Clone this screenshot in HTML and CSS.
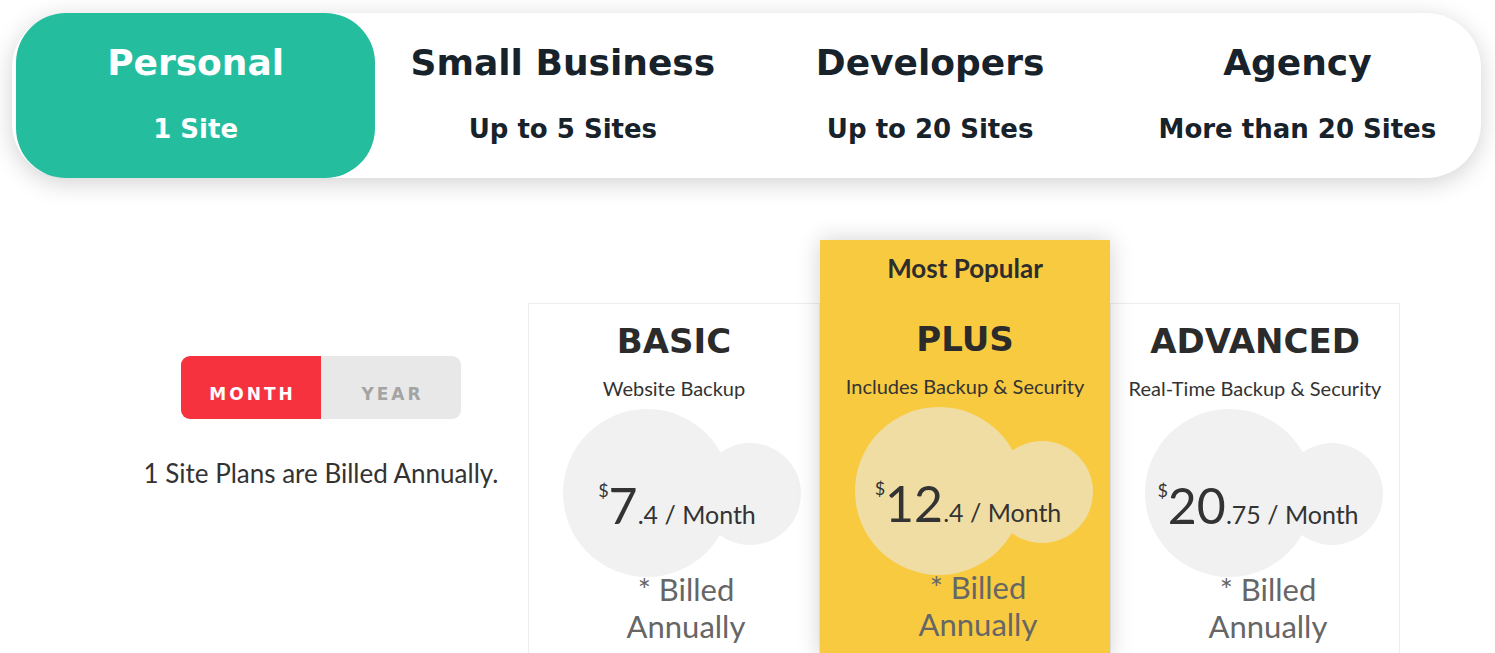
FILE: index.html
```html
<!DOCTYPE html>
<html lang="en">
<head>
<meta charset="utf-8">
<title>Pricing</title>
<link rel="stylesheet" href="styles.css">
</head>
<body>
<nav class="tabs">
  <div class="tab active">
    <div class="tab-title">Personal</div>
    <div class="tab-sub">1 Site</div>
  </div>
  <div class="tab">
    <div class="tab-title">Small Business</div>
    <div class="tab-sub">Up to 5 Sites</div>
  </div>
  <div class="tab">
    <div class="tab-title">Developers</div>
    <div class="tab-sub">Up to 20 Sites</div>
  </div>
  <div class="tab">
    <div class="tab-title">Agency</div>
    <div class="tab-sub">More than 20 Sites</div>
  </div>
</nav>

<section class="pricing">
  <div class="side">
    <div class="toggle">
      <span class="opt on">MONTH</span>
      <span class="opt">YEAR</span>
    </div>
    <p class="note">1 Site Plans are Billed Annually.</p>
  </div>

  <div class="cards">
    <div class="card basic">
      <h2 class="plan">BASIC</h2>
      <p class="desc">Website Backup</p>
      <div class="bubble">
        <span class="circle big"></span>
        <span class="circle small"></span>
        <div class="price"><sup>$</sup><span class="amt">7</span>.4 / Month</div>
      </div>
      <p class="billed">* Billed Annually</p>
    </div>

    <div class="card featured">
      <div class="badge">Most Popular</div>
      <h2 class="plan">PLUS</h2>
      <p class="desc">Includes Backup &amp; Security</p>
      <div class="bubble">
        <span class="circle big"></span>
        <span class="circle small"></span>
        <div class="price"><sup>$</sup><span class="amt">12</span>.4 / Month</div>
      </div>
      <p class="billed">* Billed Annually</p>
    </div>

    <div class="card">
      <h2 class="plan">ADVANCED</h2>
      <p class="desc">Real-Time Backup &amp; Security</p>
      <div class="bubble">
        <span class="circle big"></span>
        <span class="circle small"></span>
        <div class="price"><sup>$</sup><span class="amt">20</span>.75 / Month</div>
      </div>
      <p class="billed">* Billed Annually</p>
    </div>
  </div>
</section>
</body>
</html>
```

FILE: styles.css
```css
* { box-sizing: border-box; }
html, body { margin: 0; padding: 0; background: #fff; overflow: hidden; }
body { font-family: "Lato", "Liberation Sans", sans-serif; color: #333; }

.tabs {
  display: grid;
  grid-template-columns: repeat(4, 1fr);
  margin: 13px 14px 0 12px;
  height: 165px;
  background: #fff;
  border-radius: 55px;
  box-shadow: 0 5px 24px rgba(0,0,0,0.18);
  font-family: "DejaVu Sans", "Liberation Sans", sans-serif;
  font-weight: bold;
  color: #17222b;
}
.tab {
  display: flex;
  flex-direction: column;
  align-items: center;
  padding-top: 28px;
  border-radius: 50px;
}
.tab.active { background: #24bd9e; color: #fff; margin: 0 4px; }
.tab-title { font-size: 36px; line-height: 44px; }
.tab-sub { font-size: 26px; line-height: 30px; margin-top: 29px; }

.pricing {
  display: flex;
  align-items: flex-start;
  margin-top: 62px;
  margin-left: 141px;
}
.side {
  width: 360px;
  padding-top: 116px;
  display: flex;
  flex-direction: column;
  align-items: center;
}
.toggle {
  display: flex;
  width: 280px;
  height: 63px;
  border-radius: 9px;
  overflow: hidden;
  background: #e8e8e8;
}
.opt {
  flex: 1;
  display: flex;
  align-items: center;
  justify-content: center;
  font-family: "DejaVu Sans", sans-serif;
  font-weight: bold;
  font-size: 17px;
  letter-spacing: 3px;
  color: #a3a3a3;
  padding-top: 13px;
  padding-left: 3px;
}
.opt.on { background: #f6323f; color: #fff; }
.note {
  margin: 38px 0 0;
  font-size: 26px;
  color: #333;
  font-family: "Lato", sans-serif;
}

.cards { display: flex; margin-left: 27px; }
.card {
  width: 290px;
  height: 360px;
  margin-top: 63px;
  border: 1px solid #eeeeee;
  background: #fff;
  text-align: center;
}
.card.basic { width: 292px; }
.card.featured {
  margin-top: 0;
  height: 420px;
  background: #f8ca40;
  border-color: #f8ca40;
  box-shadow: 0 0 22px rgba(0,0,0,0.18);
  position: relative;
  z-index: 1;
}
.badge {
  height: 63px;
  padding-top: 11px;
  font-size: 26px;
  font-weight: bold;
  color: #2d2d2d;
}
.plan {
  margin: 17px 0 0;
  font-family: "DejaVu Sans", sans-serif;
  font-weight: bold;
  font-size: 34px;
  line-height: 40px;
  color: #2b2b2b;
}
.featured .plan { margin-top: 15px; }
.desc {
  margin: 15px 0 0;
  font-size: 20px;
  line-height: 24px;
  color: #333;
}
.bubble {
  position: relative;
  height: 170px;
  margin-top: 9px;
}
.circle { position: absolute; border-radius: 50%; background: #f1f1f1; }
.circle.big { left: 34px; top: 0; width: 168px; height: 168px; }
.circle.small { left: 170px; top: 34px; width: 102px; height: 102px; }
.featured .circle { background: #f0dda3; }
.price {
  position: relative;
  padding-top: 72px;
  font-size: 25px;
  color: #333;
  padding-left: 6px;
}
.price sup { font-size: 18px; vertical-align: top; position: relative; top: -2px; }
.price .amt { font-size: 50px; line-height: 48px; }
.billed {
  width: 140px;
  margin: -8px 0 0 87px;
  font-size: 31px;
  line-height: 37px;
  color: #666;
}
```
